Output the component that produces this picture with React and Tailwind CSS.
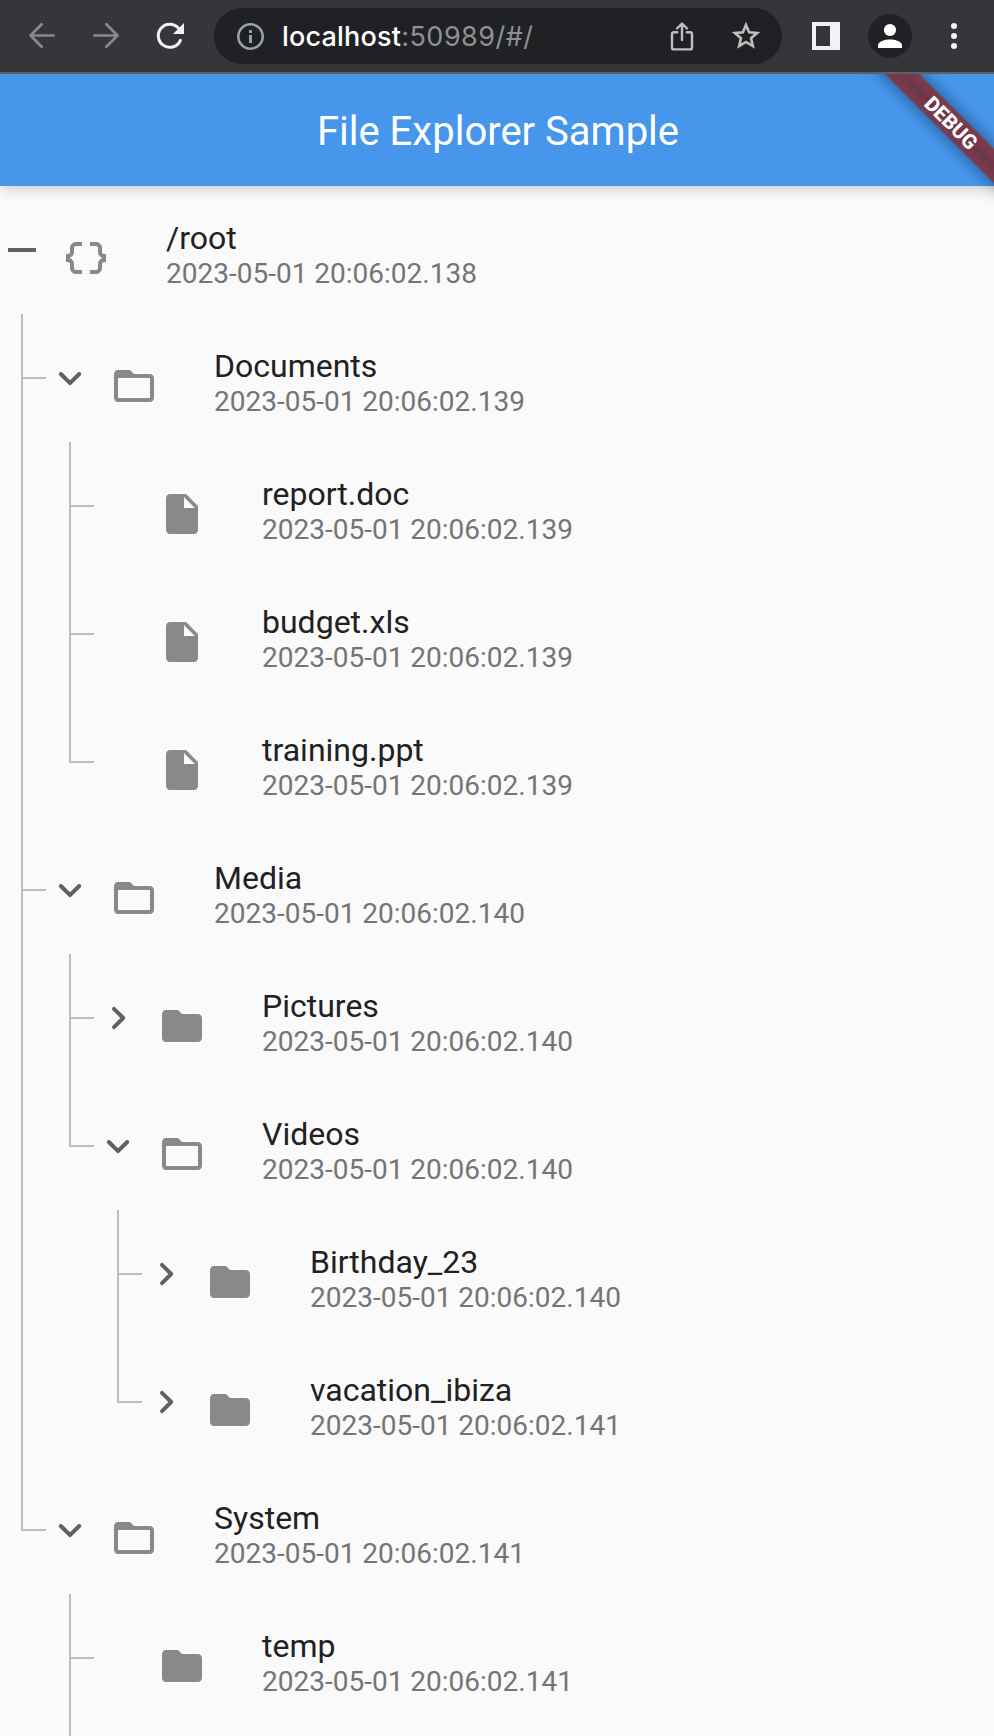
const PATHS = {
  minus: "M19 13H5v-2h14v2z",
  down: "M15.88 9.29 12 13.17 8.12 9.29a.996.996 0 1 0-1.41 1.41l4.59 4.59c.39.39 1.02.39 1.41 0l4.59-4.59a.996.996 0 0 0 0-1.41c-.39-.38-1.03-.39-1.42 0z",
  right: "M9.29 15.88 13.17 12 9.29 8.12a.996.996 0 1 1 1.41-1.41l4.59 4.59c.39.39.39 1.02 0 1.41L10.7 17.3a.996.996 0 0 1-1.41 0c-.38-.39-.39-1.03 0-1.42z",
  object:
    "M4 7v2c0 .55-.45 1-1 1H2v4h1c.55 0 1 .45 1 1v2c0 1.65 1.35 3 3 3h3v-2H7c-.55 0-1-.45-1-1v-2c0-1.3-.84-2.42-2-2.83v-.34C5.16 11.42 6 10.3 6 9V7c0-.55.45-1 1-1h3V4H7C5.35 4 4 5.35 4 7zM21 10c-.55 0-1-.45-1-1V7c0-1.65-1.35-3-3-3h-3v2h3c.55 0 1 .45 1 1v2c0 1.3.84 2.42 2 2.83v.34c-1.16.41-2 1.52-2 2.83v2c0 .55-.45 1-1 1h-3v2h3c1.65 0 3-1.35 3-3v-2c0-.55.45-1 1-1h1v-4h-1z",
  folder: "M10 4H4c-1.1 0-1.99.9-1.99 2L2 18c0 1.1.9 2 2 2h16c1.1 0 2-.9 2-2V8c0-1.1-.9-2-2-2h-8l-2-2z",
  open: "M20 6h-8l-2-2H4c-1.1 0-1.99.9-1.99 2L2 18c0 1.1.9 2 2 2h16c1.1 0 2-.9 2-2V8c0-1.1-.9-2-2-2zm0 12H4V8h16v10z",
  file: "M6 2c-1.1 0-1.99.9-1.99 2L4 20c0 1.1.89 2 1.99 2H18c1.1 0 2-.9 2-2V8l-6-6H6zm7 7V3.5L18.5 9H13z",
};

// lines: one entry per indent level — "pass" | "tee" | "end" | "none"
const ROWS = [
  { lines: [], toggle: "minus", icon: "object", name: "/root", ms: "138" },
  { lines: ["tee"], toggle: "down", icon: "open", name: "Documents", ms: "139" },
  { lines: ["pass", "tee"], icon: "file", name: "report.doc", ms: "139" },
  { lines: ["pass", "tee"], icon: "file", name: "budget.xls", ms: "139" },
  { lines: ["pass", "end"], icon: "file", name: "training.ppt", ms: "139" },
  { lines: ["tee"], toggle: "down", icon: "open", name: "Media", ms: "140" },
  { lines: ["pass", "tee"], toggle: "right", icon: "folder", name: "Pictures", ms: "140" },
  { lines: ["pass", "end"], toggle: "down", icon: "open", name: "Videos", ms: "140" },
  { lines: ["pass", "none", "tee"], toggle: "right", icon: "folder", name: "Birthday_23", ms: "140" },
  { lines: ["pass", "none", "end"], toggle: "right", icon: "folder", name: "vacation_ibiza", ms: "141" },
  { lines: ["end"], toggle: "down", icon: "open", name: "System", ms: "141" },
  { lines: ["none", "tee"], icon: "folder", name: "temp", ms: "141" },
];

function Glyph({ name, className }) {
  return (
    <svg viewBox="0 0 24 24" className={`size-12 shrink-0 ${className}`} fill="currentColor">
      <path d={PATHS[name]} />
    </svg>
  );
}

function Connector({ kind }) {
  return (
    <div className="flex h-full w-12 shrink-0 pl-[23px]">
      {kind !== "none" && (
        <div className={`w-0.5 bg-[#bdbdbd] ${kind === "end" ? "h-[65px]" : "h-full"}`} />
      )}
      {(kind === "tee" || kind === "end") && (
        <div className="mt-[63px] h-0.5 w-[23px] bg-[#bdbdbd]" />
      )}
    </div>
  );
}

function Row({ row }) {
  return (
    <div className="-ml-0.5 flex h-32 shrink-0 items-center">
      {row.lines.map((kind, i) => (
        <Connector key={i} kind={kind} />
      ))}
      <div className="w-12 shrink-0">
        {row.toggle && <Glyph name={row.toggle} className="text-[#616161]" />}
      </div>
      <div className="ml-4 mt-4 shrink-0">
        <Glyph name={row.icon} className="text-[#898989]" />
      </div>
      <div className="ml-14 flex flex-col whitespace-nowrap pt-3">
        <span className="text-[32px] leading-[36px] text-[#212121]">{row.name}</span>
        <span className="text-[28px] leading-[36px] text-[#757575]">2023-05-01 20:06:02.{row.ms}</span>
      </div>
    </div>
  );
}

function BrowserBar() {
  return (
    <div className="flex h-[74px] shrink-0 items-center border-b-2 border-[#5f6063] bg-[#35363a]">
      <svg className="ml-6 size-9 text-[#88898c]" viewBox="0 0 36 36" fill="none" stroke="currentColor" strokeWidth="2.7" strokeLinecap="round" strokeLinejoin="round">
        <path d="M29.7 17.5H6.5M17.7 6.2 6.5 17.5l11.2 11.3" />
      </svg>
      <svg className="ml-7 size-9 text-[#88898c]" viewBox="0 0 36 36" fill="none" stroke="currentColor" strokeWidth="2.7" strokeLinecap="round" strokeLinejoin="round">
        <path d="M6.3 17.5h23.2M18.3 6.2l11.2 11.3-11.2 11.3" />
      </svg>
      <svg className="ml-7 size-9" viewBox="0 0 36 36" fill="none">
        <path d="M28.4 22.3A11.5 11.5 0 1 1 26.6 10.4" stroke="#f1f3f4" strokeWidth="3" strokeLinecap="round" />
        <path d="M32 5v11H21z" fill="#f1f3f4" />
      </svg>
      <div className="ml-[26px] flex h-14 w-[568px] shrink-0 items-center rounded-full bg-[#202124] pl-[22px] pr-[18px]">
        <svg className="size-7 translate-y-[0.5px]" viewBox="0 0 28 28" fill="none">
          <circle cx="14.5" cy="14" r="12.2" stroke="#9aa0a6" strokeWidth="2.6" />
          <path d="M13 12.5h3v8h-3zM13 7.5h3v3h-3z" fill="#9aa0a6" />
        </svg>
        <span className="ml-[18px] flex-1 whitespace-nowrap pt-0.5 font-[Inter,sans-serif] text-[27px] leading-[34px] tracking-[0.49px] text-[#8f9093]">
          <span className="font-medium tracking-[0.2px] text-white">localhost</span>:50989/#/
        </span>
        <svg className="size-9 text-[#c0bfbf]" viewBox="0 0 36 36" fill="none" stroke="currentColor" strokeWidth="2.4" strokeLinecap="round" strokeLinejoin="round">
          <path d="M13.2 14.2H10a2 2 0 0 0-2 2v13.2a2 2 0 0 0 2 2h16a2 2 0 0 0 2-2V16.2a2 2 0 0 0-2-2h-3.2M18 22V6M13 10.5l5-5 5 5" />
        </svg>
        <svg className="ml-7 size-9 text-[#c0bfbf]" viewBox="0 0 36 36" fill="none" stroke="currentColor" strokeWidth="2.6">
          <path d="M18 6.9l3.1 7.4 8 .68-6.07 5.26 1.82 7.82L18 23.9l-6.85 4.16 1.82-7.82-6.07-5.26 8-.68z" />
        </svg>
      </div>
      <div className="ml-[30px] h-7 w-7 shrink-0 border-4 border-r-[10px] border-[#f1f3f4]" />
      <div className="ml-7 size-11 shrink-0 rounded-full bg-[#202124]">
        <svg viewBox="0 0 44 44" fill="#fff">
          <circle cx="22" cy="16" r="6.1" />
          <path d="M10 34v-2.6C10 27.6 17 25.6 22 25.6s12 2 12 5.8V34z" />
        </svg>
      </div>
      <div className="ml-[39px] flex flex-col gap-1">
        <span className="size-1.5 rounded-full bg-[#f1f3f4]" />
        <span className="size-1.5 rounded-full bg-[#f1f3f4]" />
        <span className="size-1.5 rounded-full bg-[#f1f3f4]" />
      </div>
    </div>
  );
}

export default function App() {
  return (
    <div className="flex h-[1736px] w-[994px] flex-col overflow-hidden bg-[#fafafa] font-[Roboto,sans-serif]">
      <BrowserBar />
      <div className="relative flex flex-1 flex-col overflow-hidden">
        <header className="flex h-28 shrink-0 items-center justify-center bg-[#4696ec] pl-0.5 pt-1 text-[40px] leading-[48px] text-white shadow-[0_4px_8px_-2px_rgba(0,0,0,0.09),0_8px_12px_0_rgba(0,0,0,0.05),0_2px_20px_0_rgba(0,0,0,0.05)]">
          File Explorer Sample
        </header>
        <main className="flex flex-1 flex-col overflow-hidden">
          {ROWS.map((row) => (
            <Row key={row.name} row={row} />
          ))}
          <div className="-ml-0.5 flex h-[14px] shrink-0">
            <Connector kind="none" />
            <Connector kind="pass" />
          </div>
        </main>
        <div className="absolute left-[851px] top-[37px] flex h-6 w-[200px] rotate-45 items-center justify-center bg-[linear-gradient(#7b3c4f,#6f3646_50%,#7b3c4f)] text-[20.4px] font-extrabold leading-6 text-white shadow-[0_0_16px_rgba(0,0,0,0.5)]">
          DEBUG
        </div>
      </div>
    </div>
  );
}
